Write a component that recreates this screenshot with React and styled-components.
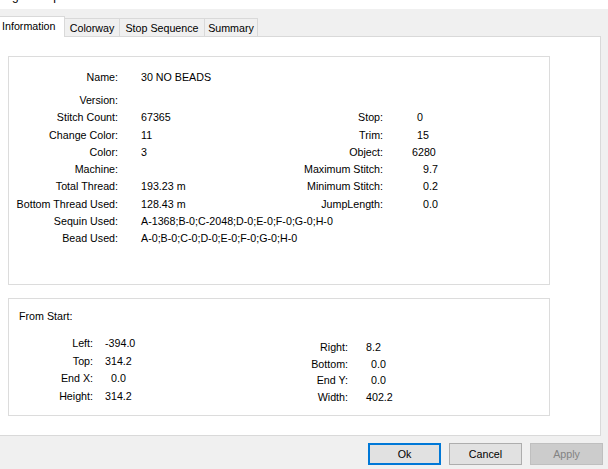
import React from "react";
import styled, { createGlobalStyle } from "styled-components";

const Global = createGlobalStyle`
  html, body { margin: 0; padding: 0; background: #f0f0f0; }
  body {
    font-family: "Liberation Sans", Arial, sans-serif;
    font-size: 10.7px;
    color: #000;
    overflow: hidden;
  }
`;

const Window = styled.div`
  width: 608px;
  height: 469px;
  background: #f0f0f0;
  display: flex;
  flex-direction: column;
  overflow: hidden;
`;

const TitleBar = styled.div`
  height: 9px;
  flex-shrink: 0;
  background: #fff;
  overflow: hidden;
`;

const TitleText = styled.div`
  font-size: 12px;
  line-height: 14px;
  margin-top: -11px;
  margin-left: -12px;
  white-space: nowrap;
`;

const TabStrip = styled.div`
  position: relative;
  z-index: 1;
  display: flex;
  align-items: flex-end;
  height: 20px;
  margin-top: 7px;
  flex-shrink: 0;
`;

const Tab = styled.div`
  box-sizing: border-box;
  width: ${(p) => p.$w}px;
  height: ${(p) => (p.$active ? 21 : 18)}px;
  margin-bottom: ${(p) => (p.$active ? -1 : 0)}px;
  margin-left: ${(p) => (p.$active ? -2 : 0)}px;
  background: ${(p) => (p.$active ? "#fff" : "#f0f0f0")};
  border-top: 1px solid #d9d9d9;
  border-right: 1px solid #d9d9d9;
  border-left: ${(p) => (p.$active ? "1px solid #d9d9d9" : "none")};
  display: flex;
  align-items: center;
  justify-content: ${(p) => (p.$active ? "flex-start" : "center")};
  padding-left: ${(p) => (p.$active ? 3 : 0)}px;
  padding-bottom: ${(p) => (p.$active ? 2 : 0)}px;
  white-space: nowrap;
`;

const Page = styled.div`
  box-sizing: border-box;
  margin-left: -1px;
  width: 602px;
  height: 400px;
  flex-shrink: 0;
  background: #fff;
  border: 1px solid #d9d9d9;
  padding: 19px 0 0 8px;
  display: flex;
  flex-direction: column;
  gap: 13px;
`;

const Group = styled.div`
  box-sizing: border-box;
  width: 542px;
  height: ${(p) => p.$h}px;
  border: 1px solid #dcdcdc;
  flex-shrink: 0;
`;

const InfoGrid = styled.div`
  display: grid;
  grid-template-columns: 109px 119px 100px 1fr;
  column-gap: 23px;
  grid-template-rows: 23px;
  grid-auto-rows: 17.25px;
  padding-top: 12px;
  line-height: 17px;
  white-space: nowrap;
`;

const Label = styled.div`
  grid-column: ${(p) => p.$col || "auto"};
  text-align: right;
`;

const Value = styled.div`
  grid-column: ${(p) => p.$span || "auto"};
  padding-left: ${(p) => p.$indent || 0}px;
`;

const GroupTitle = styled.div`
  padding: 9px 0 0 10px;
  line-height: 17px;
`;

const StartBody = styled.div`
  display: flex;
  margin-top: 10px;
  white-space: nowrap;
`;

const StartBlock = styled.div`
  display: grid;
  grid-template-columns: ${(p) => p.$label}px 1fr;
  column-gap: ${(p) => p.$gap}px;
  grid-auto-rows: ${(p) => p.$pitch}px;
  width: ${(p) => p.$w || "auto"};
  padding-top: ${(p) => p.$top || 0}px;
  line-height: 17px;
`;

const ButtonBar = styled.div`
  display: flex;
  justify-content: flex-end;
  gap: 8px;
  padding: 7px 5px 0 0;
`;

const Button = styled.div`
  box-sizing: border-box;
  width: 73px;
  height: 22px;
  display: flex;
  align-items: center;
  justify-content: center;
  background: ${(p) => (p.$disabled ? "#cccccc" : "#e1e1e1")};
  color: ${(p) => (p.$disabled ? "#838383" : "#000")};
  border: ${(p) =>
    p.$default
      ? "2px solid #0078d7"
      : p.$disabled
      ? "1px solid #bfbfbf"
      : "1px solid #adadad"};
`;

const leftRows = [
  ["Stitch Count:", "67365", "Stop:", "0", 11],
  ["Change Color:", "11", "Trim:", "15", 11],
  ["Color:", "3", "Object:", "6280", 6],
  ["Machine:", "", "Maximum Stitch:", "9.7", 17],
  ["Total Thread:", "193.23 m", "Minimum Stitch:", "0.2", 17],
  ["Bottom Thread Used:", "128.43 m", "JumpLength:", "0.0", 17],
];

const startLeft = [
  ["Left:", "-394.0", 0],
  ["Top:", "314.2", 0],
  ["End X:", "0.0", 6],
  ["Height:", "314.2", 0],
];

const startRight = [
  ["Right:", "8.2", 0],
  ["Bottom:", "0.0", 5],
  ["End Y:", "0.0", 5],
  ["Width:", "402.2", 0],
];

export default function App() {
  return (
    <Window>
      <Global />
      <TitleBar>
        <TitleText>Design Setup</TitleText>
      </TitleBar>
      <TabStrip>
        <Tab $active $w={67}>Information</Tab>
        <Tab $w={55}>Colorway</Tab>
        <Tab $w={85}>Stop Sequence</Tab>
        <Tab $w={53}>Summary</Tab>
      </TabStrip>
      <Page>
        <Group $h={229}>
          <InfoGrid>
            <Label $col="1">Name:</Label>
            <Value $span="2 / -1">30 NO BEADS</Value>
            <Label $col="1">Version:</Label>
            <Value $span="2 / -1"></Value>
            {leftRows.map(([l, v, rl, rv, ind]) => (
              <React.Fragment key={l}>
                <Label $col="1">{l}</Label>
                <Value>{v}</Value>
                <Label $col="3">{rl}</Label>
                <Value $indent={ind}>{rv}</Value>
              </React.Fragment>
            ))}
            <Label $col="1">Sequin Used:</Label>
            <Value $span="2 / -1">A-1368;B-0;C-2048;D-0;E-0;F-0;G-0;H-0</Value>
            <Label $col="1">Bead Used:</Label>
            <Value $span="2 / -1">A-0;B-0;C-0;D-0;E-0;F-0;G-0;H-0</Value>
          </InfoGrid>
        </Group>
        <Group $h={118}>
          <GroupTitle>From Start:</GroupTitle>
          <StartBody>
            <StartBlock $label={84} $gap={12} $pitch={17.7} $w="200px">
              {startLeft.map(([l, v, ind]) => (
                <React.Fragment key={l}>
                  <Label>{l}</Label>
                  <Value $indent={ind}>{v}</Value>
                </React.Fragment>
              ))}
            </StartBlock>
            <StartBlock $label={139} $gap={18} $pitch={16.7} $top={4}>
              {startRight.map(([l, v, ind]) => (
                <React.Fragment key={l}>
                  <Label>{l}</Label>
                  <Value $indent={ind}>{v}</Value>
                </React.Fragment>
              ))}
            </StartBlock>
          </StartBody>
        </Group>
      </Page>
      <ButtonBar>
        <Button $default>Ok</Button>
        <Button>Cancel</Button>
        <Button $disabled>Apply</Button>
      </ButtonBar>
    </Window>
  );
}
